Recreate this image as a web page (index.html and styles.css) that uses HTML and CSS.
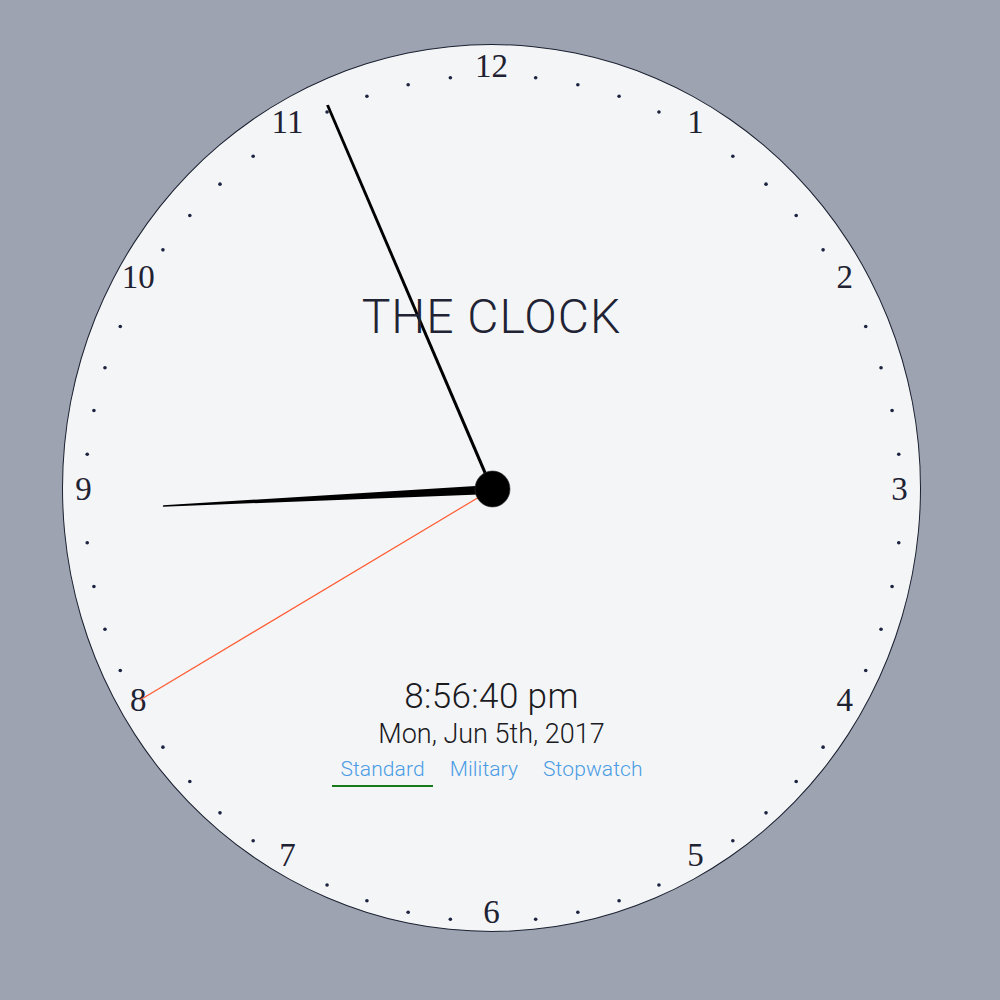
FILE: index.html
```html
<!DOCTYPE html>
<html>
<head>
<meta charset="utf-8">
<title>The Clock</title>
<link rel="stylesheet" href="styles.css">
</head>
<body>
<div class="page">
  <div class="face">
    <svg class="dial" viewBox="62 44 859 888" width="859" height="888" xmlns="http://www.w3.org/2000/svg">
      <g id="marks" class="marks"></g>
      <g id="numerals" class="numerals"></g>
      <g class="hands">
        <polygon class="hand" points="492.3,494 491.7,485 163.2,505.3 162.8,506.7"/>
        <polygon class="hand" points="493.9,489.4 490.1,488.6 326.1,105.2 328.9,104.8"/>
        <line class="second" x1="492.5" y1="489" x2="140" y2="700"/>
        <ellipse class="pin" cx="492.5" cy="489" rx="17.5" ry="18"/>
      </g>
    </svg>
    <div class="content">
      <h1 class="title">THE CLOCK</h1>
      <div class="time">8:56:40 pm</div>
      <div class="date">Mon, Jun 5th, 2017</div>
      <nav class="tabs">
        <a class="tab active">Standard</a>
        <a class="tab">Military</a>
        <a class="tab">Stopwatch</a>
      </nav>
    </div>
  </div>
</div>
<script src="script.js"></script>
</body>
</html>
```
FILE: styles.css
```css
html, body {
  margin: 0;
  padding: 0;
  background: #9da3b1;
}
.page {
  width: 1000px;
  height: 1000px;
  box-sizing: border-box;
  padding: 44px 0 0 62px;
}
.face {
  position: relative;
  width: 859px;
  height: 888px;
  box-sizing: border-box;
  border: 1px solid #1b2030;
  border-radius: 50%;
  background: #f4f5f7;
}
.dial {
  position: absolute;
  left: -1px;
  top: -1px;
  overflow: visible;
}
.marks circle {
  fill: #1c2340;
}
.numerals text {
  font-family: "Liberation Serif", "Times New Roman", serif;
  font-size: 33px;
  fill: #1e2232;
  text-anchor: middle;
}
.hand {
  fill: #000;
}
.second {
  stroke: #ff5a30;
  stroke-width: 1.2;
}
.pin {
  fill: #000;
  stroke: #333;
  stroke-width: 0.6;
}
.content {
  position: relative;
  display: flex;
  flex-direction: column;
  align-items: center;
  padding-top: 248px;
  font-family: Roboto, "Liberation Sans", sans-serif;
  font-weight: 300;
  pointer-events: none;
}
.title {
  margin: 0;
  font-size: 48px;
  line-height: 48px;
  font-weight: 300;
  color: #1f2333;
  letter-spacing: 1px;
}
.time {
  margin-top: 338px;
  font-size: 35px;
  line-height: 35px;
  letter-spacing: 0.4px;
  color: #1a1a1f;
}
.date {
  margin-top: 7px;
  font-size: 27px;
  line-height: 27px;
  color: #1a1a1f;
}
.tabs {
  margin-top: 11px;
  display: flex;
  gap: 9px;
}
.tab {
  font-size: 21px;
  line-height: 21px;
  letter-spacing: 0.1px;
  color: #4a9ce4;
  padding: 0 8px 5px;
  border-bottom: 2px solid transparent;
}
.tab.active {
  border-bottom-color: #17791a;
}
```
FILE: script.js
```js
(function () {
  var NS = "http://www.w3.org/2000/svg";
  var marks = document.getElementById("marks");
  var nums = document.getElementById("numerals");
  for (var m = 0; m < 60; m++) {
    if (m % 5 === 0) continue;
    var a = m * Math.PI / 30;
    var c = document.createElementNS(NS, "circle");
    c.setAttribute("cx", (493 + 408 * Math.sin(a)).toFixed(2));
    c.setAttribute("cy", (498.5 - 423 * Math.cos(a)).toFixed(2));
    c.setAttribute("r", "1.8");
    marks.appendChild(c);
  }
  for (var h = 1; h <= 12; h++) {
    var b = h * Math.PI / 6;
    var t = document.createElementNS(NS, "text");
    t.setAttribute("x", (491.5 + 408 * Math.sin(b)).toFixed(2));
    t.setAttribute("y", (488.5 - 423 * Math.cos(b) + 11).toFixed(2));
    t.textContent = String(h);
    nums.appendChild(t);
  }
})();
```
